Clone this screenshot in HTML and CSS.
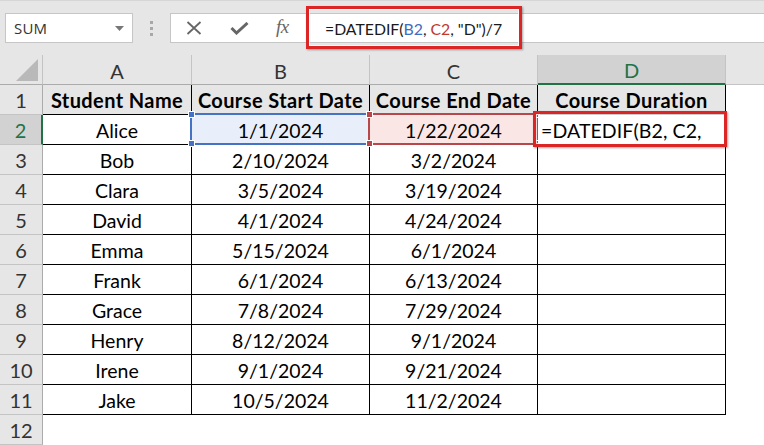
FILE: index.html
```html
<!DOCTYPE html>
<html>
<head>
<meta charset="utf-8">
<link rel="stylesheet" href="styles.css">
</head>
<body>
<div class="app">
  <div class="toolbar">
    <div class="namebox">
      <span class="nb-text">SUM</span>
      <svg class="nb-arrow" width="9" height="5" viewBox="0 0 9 5"><path d="M0 0 H9 L4.5 5 Z" fill="#777"/></svg>
    </div>
    <div class="sep"><i></i><i></i><i></i></div>
    <div class="fbar">
      <div class="fbtns">
        <svg class="ico-x" width="16" height="14" viewBox="0 0 16 14"><path d="M1.5 1 L14.5 13 M14.5 1 L1.5 13" stroke="#666" stroke-width="1.8" fill="none"/></svg>
        <svg class="ico-check" width="19" height="13" viewBox="0 0 19 13"><path d="M1.5 6 L6.5 11 L17.5 1" stroke="#666" stroke-width="3" fill="none"/></svg>
        <span class="fx">fx</span>
      </div>
      <div class="formula">
        <span class="ftext">=DATEDIF(<span class="ref-b">B2</span>, <span class="ref-c">C2</span>, "D")/7</span>
        <div class="callout callout-formula"></div>
      </div>
    </div>
  </div>

  <div class="sheet">
    <div class="corner"><svg width="22" height="22" viewBox="0 0 22 22"><path d="M22 0 V22 H0 Z" fill="#b9b9b9"/></svg></div>
    <div class="colh">A</div>
    <div class="colh">B</div>
    <div class="colh">C</div>
    <div class="colh active">D</div>
    <div class="colh-rest"></div>

    <div class="rowh">1</div>
    <div class="c h">Student Name</div>
    <div class="c h">Course Start Date</div>
    <div class="c h">Course End Date</div>
    <div class="c h">Course Duration</div>
    <div class="blank"></div>

    <div class="rowh active">2</div>
    <div class="c">Alice</div>
    <div class="c sel-b">1/1/2024<span class="rng rng-b"><i class="hd tl"></i><i class="hd bl"></i></span></div>
    <div class="c sel-c">1/22/2024<span class="rng rng-c"><i class="hd tl"></i><i class="hd bl"></i><i class="hd tr"></i><i class="hd br"></i></span></div>
    <div class="c edit">=DATEDIF(B2, C2,<div class="callout callout-cell"></div></div>
    <div class="blank"></div>

    <div class="rowh">3</div>
    <div class="c">Bob</div>
    <div class="c">2/10/2024</div>
    <div class="c">3/2/2024</div>
    <div class="c"></div>
    <div class="blank"></div>

    <div class="rowh">4</div>
    <div class="c">Clara</div>
    <div class="c">3/5/2024</div>
    <div class="c">3/19/2024</div>
    <div class="c"></div>
    <div class="blank"></div>

    <div class="rowh">5</div>
    <div class="c">David</div>
    <div class="c">4/1/2024</div>
    <div class="c">4/24/2024</div>
    <div class="c"></div>
    <div class="blank"></div>

    <div class="rowh">6</div>
    <div class="c">Emma</div>
    <div class="c">5/15/2024</div>
    <div class="c">6/1/2024</div>
    <div class="c"></div>
    <div class="blank"></div>

    <div class="rowh">7</div>
    <div class="c">Frank</div>
    <div class="c">6/1/2024</div>
    <div class="c">6/13/2024</div>
    <div class="c"></div>
    <div class="blank"></div>

    <div class="rowh">8</div>
    <div class="c">Grace</div>
    <div class="c">7/8/2024</div>
    <div class="c">7/29/2024</div>
    <div class="c"></div>
    <div class="blank"></div>

    <div class="rowh">9</div>
    <div class="c">Henry</div>
    <div class="c">8/12/2024</div>
    <div class="c">9/1/2024</div>
    <div class="c"></div>
    <div class="blank"></div>

    <div class="rowh">10</div>
    <div class="c">Irene</div>
    <div class="c">9/1/2024</div>
    <div class="c">9/21/2024</div>
    <div class="c"></div>
    <div class="blank"></div>

    <div class="rowh">11</div>
    <div class="c">Jake</div>
    <div class="c">10/5/2024</div>
    <div class="c">11/2/2024</div>
    <div class="c"></div>
    <div class="blank"></div>

    <div class="rowh">12</div>
    <div class="blank"></div>
    <div class="blank"></div>
    <div class="blank"></div>
    <div class="blank"></div>
    <div class="blank"></div>
  </div>
</div>
</body>
</html>
```

FILE: styles.css
```css
* { box-sizing: border-box; }
html, body { margin: 0; padding: 0; }
body {
  width: 764px;
  height: 445px;
  overflow: hidden;
  background: #ffffff;
  font-family: Lato, "Liberation Sans", sans-serif;
}
.app { width: 764px; }

/* ---------- toolbar ---------- */
.toolbar {
  height: 55px;
  background: #e6e6e6;
  border-top: 1px solid #d6d6d6;
  display: flex;
  align-items: flex-start;
  padding: 12px 0 0 5px;
}
.namebox {
  width: 128px;
  height: 30px;
  background: #fff;
  border: 1px solid #c6c6c6;
  display: flex;
  align-items: center;
  justify-content: space-between;
  padding: 0 8px 0 8px;
}
.nb-text {
  font-family: "Open Sans", "Noto Sans", sans-serif;
  font-size: 15px;
  color: #333;
  letter-spacing: 0.2px;
}
.sep {
  width: 37px;
  height: 30px;
  display: flex;
  flex-direction: column;
  align-items: center;
  justify-content: center;
  gap: 3px;
}
.sep i {
  display: block;
  width: 3px;
  height: 3px;
  background: #a8a8a8;
}
.fbar {
  flex: 1;
  height: 30px;
  background: #fff;
  border: 1px solid #c6c6c6;
  border-right: none;
  display: flex;
}
.fbtns {
  width: 139px;
  display: flex;
  align-items: center;
  padding-left: 15px;
}
.ico-x { margin-right: 28px; }
.ico-check { margin-right: 27px; margin-top: 1px; }
.fx {
  font-family: "Liberation Serif", "DejaVu Serif", serif;
  font-style: italic;
  font-size: 19px;
  color: #666;
  letter-spacing: -0.5px;
  margin-top: -3px;
}
.formula {
  position: relative;
  flex: 1;
  display: flex;
  align-items: center;
  padding-left: 15px;
}
.ftext {
  font-family: Lato, "Liberation Sans", sans-serif;
  font-size: 15.8px;
  color: #1a1a1a;
}
.ref-b { color: #3d6cc0; }
.ref-c { color: #c0392b; }

.callout {
  position: absolute;
  border: 3px solid #dc2626;
  box-shadow: 1px 1px 2px rgba(0,0,0,0.35), inset 0 0 0 1px rgba(255,255,255,0.8);
  z-index: 5;
  pointer-events: none;
}
.callout-formula {
  left: -4px;
  top: -8px;
  width: 216px;
  height: 43px;
}

/* ---------- sheet ---------- */
.sheet {
  display: grid;
  grid-template-columns: 43px 149px 178px 168px 188px 1fr;
  grid-auto-rows: 30px;
  font-size: 19.5px;
  color: #000;
}
.corner {
  background: #e6e6e6;
  border-right: 1px solid #c4c4c4;
  border-bottom: 1px solid #ababab;
  display: flex;
  align-items: flex-end;
  justify-content: flex-end;
  padding: 0 4px 3px 0;
}
.colh {
  background: #e6e6e6;
  border-right: 1px solid #c4c4c4;
  border-bottom: 1px solid #ababab;
  display: flex;
  align-items: center;
  justify-content: center;
  color: #333;
  font-size: 20px;
  padding-top: 2px;
}
.colh.active {
  background: #d2d2d2;
  color: #217346;
  border-bottom: 2px solid #217346;
}
.colh-rest {
  background: #e6e6e6;
  border-bottom: 1px solid #c4c4c4;
}
.rowh {
  background: #e6e6e6;
  border-right: 1px solid #ababab;
  border-bottom: 1px solid #c4c4c4;
  display: flex;
  align-items: center;
  justify-content: center;
  color: #333;
  font-size: 20px;
}
.rowh.active {
  background: #d2d2d2;
  color: #217346;
  border-right: 2px solid #217346;
}
.c {
  position: relative;
  background: #fff;
  border-right: 1px solid #000;
  border-bottom: 1px solid #000;
  display: flex;
  align-items: center;
  justify-content: center;
  white-space: nowrap;
  padding-top: 1px;
}
.c.h {
  background: #e7e6e6;
  font-weight: 700;
  font-size: 20px;
  letter-spacing: 0.4px;
}
.blank { background: #fff; }

.sel-b { background: #e9effa; }
.sel-c { background: #fbe6e6; }
.rng {
  position: absolute;
  left: -2px;
  top: -2px;
  right: -1px;
  bottom: -1px;
  border: 2px solid;
  z-index: 3;
}
.rng-b { border-color: #4472c4; }
.rng-c { border-color: #b8474b; }
.hd {
  position: absolute;
  width: 7px;
  height: 7px;
  border: 1px solid #fff;
}
.rng-b .hd { background: #4472c4; }
.rng-c .hd { background: #b8474b; }
.hd.tl { left: -4px; top: -4px; }
.hd.bl { left: -4px; bottom: -4px; }
.hd.tr { right: -4px; top: -4px; }
.hd.br { right: -4px; bottom: -4px; }

.c.edit {
  justify-content: flex-start;
  padding-left: 3px;
  z-index: 4;
  letter-spacing: 0.1px;
}
.callout-cell {
  left: -5px;
  top: -4px;
  right: -2px;
  bottom: -3px;
}
```
